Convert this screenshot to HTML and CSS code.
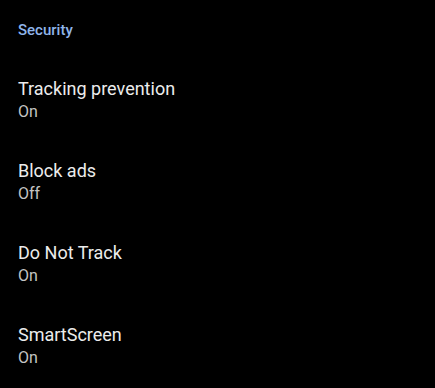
FILE: index.html
```html
<!DOCTYPE html>
<html lang="en">
<head>
  <meta charset="UTF-8">
  <title>Security</title>
  <link rel="stylesheet" href="styles.css">
</head>
<body>
  <div class="settings">
    <div class="section-title">Security</div>

    <div class="item">
      <div class="item-title">Tracking prevention</div>
      <div class="item-value">On</div>
    </div>

    <div class="item">
      <div class="item-title">Block ads</div>
      <div class="item-value">Off</div>
    </div>

    <div class="item">
      <div class="item-title">Do Not Track</div>
      <div class="item-value">On</div>
    </div>

    <div class="item">
      <div class="item-title">SmartScreen</div>
      <div class="item-value">On</div>
    </div>
  </div>
</body>
</html>
```

FILE: styles.css
```css
* {
  box-sizing: border-box;
}
html, body {
  margin: 0;
  background-color: #000;
}
.settings {
  font-family: Roboto, "Noto Sans", sans-serif;
  padding: 0 18px;
}
.section-title {
  color: #8fb5ea;
  font-size: 15px;
  font-weight: 500;
  line-height: 20px;
  padding: 20px 0 19px;
}
.item {
  padding: 19px 0;
}
.item-title {
  color: #ececec;
  font-size: 18px;
  line-height: 22px;
}
.item-value {
  color: #c4c4c4;
  font-size: 16px;
  line-height: 22px;
  padding-top: 1px;
  margin-bottom: -1px;
}
```
